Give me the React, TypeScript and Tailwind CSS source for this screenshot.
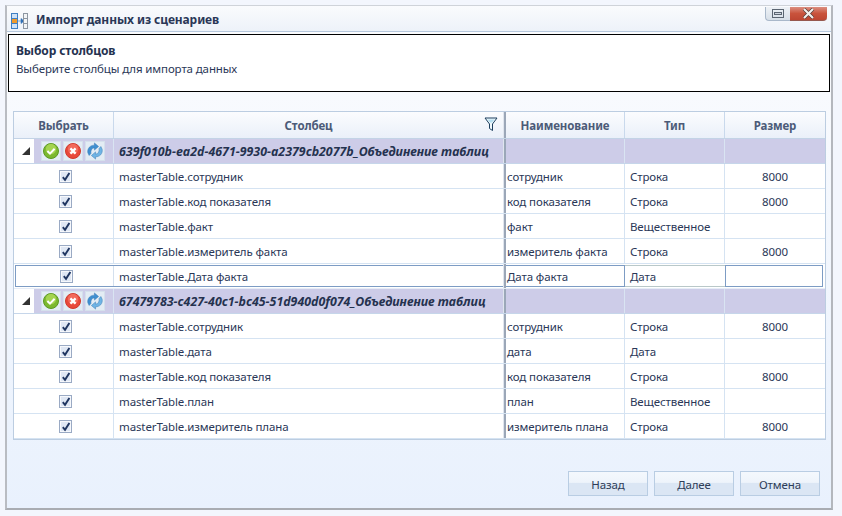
import React from 'react';

type Row = { column: string; name: string; type: string; size?: string; selected?: boolean };

const groups: { title: string; rows: Row[] }[] = [
  {
    title: '639f010b-ea2d-4671-9930-a2379cb2077b_Объединение таблиц',
    rows: [
      { column: 'masterTable.сотрудник', name: 'сотрудник', type: 'Строка', size: '8000' },
      { column: 'masterTable.код показателя', name: 'код показателя', type: 'Строка', size: '8000' },
      { column: 'masterTable.факт', name: 'факт', type: 'Вещественное' },
      { column: 'masterTable.измеритель факта', name: 'измеритель факта', type: 'Строка', size: '8000' },
      { column: 'masterTable.Дата факта', name: 'Дата факта', type: 'Дата', selected: true },
    ],
  },
  {
    title: '67479783-c427-40c1-bc45-51d940d0f074_Объединение таблиц',
    rows: [
      { column: 'masterTable.сотрудник', name: 'сотрудник', type: 'Строка', size: '8000' },
      { column: 'masterTable.дата', name: 'дата', type: 'Дата' },
      { column: 'masterTable.код показателя', name: 'код показателя', type: 'Строка', size: '8000' },
      { column: 'masterTable.план', name: 'план', type: 'Вещественное' },
      { column: 'masterTable.измеритель плана', name: 'измеритель плана', type: 'Строка', size: '8000' },
    ],
  },
];

const cols = 'grid grid-cols-[100px_389px_3px_119px_100px_100px]';

const WizardIcon = () => (
  <svg width="17" height="16" viewBox="0 0 17 16">
    <rect x="0.5" y="0.5" width="6" height="15" fill="#cfe2f7" stroke="#3f7fc4" />
    <path d="M1 5.5h5M1 10.5h5" stroke="#3f7fc4" />
    <rect x="1" y="6" width="5" height="4" fill="#f09a2a" />
    <path d="M7 8h3V5.5L13 8l-3 2.5V8" fill="#2f6fb5" stroke="#2f6fb5" strokeWidth="0.6" />
    <rect x="12.5" y="0.5" width="4" height="15" fill="#f2f4f6" stroke="#8c96a2" />
    <path d="M13 5.5h3M13 10.5h3" stroke="#8c96a2" />
  </svg>
);

const FilterIcon = () => (
  <svg width="14" height="15" viewBox="0 0 14 15">
    <path d="M1 1h12L8.5 7v6.5L5.5 11.5V7z" fill="#eef8fc" stroke="#1d3f5e" strokeWidth="1" />
    <path d="M3.5 2.5h7L8 5.5H6z" fill="#b5e0f2" />
  </svg>
);

const Check = () => (
  <span className="flex h-[13px] w-[13px] items-center justify-center border border-[#9aaac4] bg-[#dfe7f4] shadow-[inset_0_0_0_1px_#f6f8fc]">
    <svg width="10" height="10" viewBox="0 0 10 10">
      <path d="M1.8 5.2 4 7.8 8.4 1" fill="none" stroke="#1f3560" strokeWidth="1.9" />
    </svg>
  </span>
);

const ToolButton = ({ children }: { children: React.ReactNode }) => (
  <span className="flex h-5 w-5 items-center justify-center border border-[#d5e0ec] bg-[#e3ecf4]">{children}</span>
);

const GroupIcons = () => (
  <div className="flex items-center gap-[2px] pl-[7px]">
    <ToolButton>
      <svg width="16" height="16" viewBox="0 0 16 16">
        <circle cx="8" cy="8" r="7.5" fill="#7cb82f" stroke="#5b9a22" />
        <circle cx="8" cy="6" r="5.2" fill="#a4d44f" />
        <path d="M4.4 8 7 10.6l4.6-4.8" fill="none" stroke="#fff" strokeWidth="2" />
      </svg>
    </ToolButton>
    <ToolButton>
      <svg width="16" height="16" viewBox="0 0 16 16">
        <circle cx="8" cy="8" r="7.5" fill="#e8483a" stroke="#d0392c" />
        <circle cx="8" cy="6" r="5.2" fill="#f2695a" />
        <path d="M5.4 5.4l5.2 5.2M10.6 5.4l-5.2 5.2" stroke="#fff" strokeWidth="2.2" />
      </svg>
    </ToolButton>
    <ToolButton>
      <svg width="18" height="18" viewBox="0 0 16 16">
        <path d="M1.6 9.5C1 5.5 3.8 2.8 7.5 2.8V.8L11.2 4 7.5 7.2V5.3C5.5 5.3 4 7 4.4 10.2L2.8 12z" fill="#3f8fd0" stroke="#2e74b0" strokeWidth="0.4" />
        <path d="M14.4 6.5c.6 4-2.2 6.7-5.9 6.7v2L4.8 12l3.7-3.2v1.9c2 0 3.5-1.7 3.1-4.9L13.2 4z" fill="#6fb4e4" stroke="#2e74b0" strokeWidth="0.4" />
      </svg>
    </ToolButton>
  </div>
);

const HeaderCell = ({ children, last }: { children?: React.ReactNode; last?: boolean }) => (
  <div className={`flex items-center justify-center pt-[2px] text-[11.5px] font-bold text-[#4c5b78] ${last ? '' : 'border-r border-[#c9d9ec]'}`}>
    {children}
  </div>
);

const Splitter = () => <div className="border-l border-[#dfe5ee] bg-[#9ba7b8]" />;

const GroupRow = ({ title }: { title: string }) => (
  <div className={`${cols} h-[25px] border-b border-[#c6d6ea]`}>
    <div className="flex border-r border-[#d9e4f2]">
      <div className="flex w-5 items-center justify-center bg-white">
        <span className="ml-[3px] h-0 w-0 border-b-[8px] border-l-[8px] border-b-[#333] border-l-transparent" />
      </div>
      <div className="flex flex-1 items-center bg-[#cdcce8]">
        <GroupIcons />
      </div>
    </div>
    <div className="flex items-center bg-[#cdcce8] pt-[3px] pl-[5px] text-[12.4px] tracking-normal font-bold italic whitespace-nowrap text-[#25324f]">{title}</div>
    <Splitter />
    <div className="border-r border-[#d9e4f2] bg-[#cdcce8]" />
    <div className="border-r border-[#d9e4f2] bg-[#cdcce8]" />
    <div className="bg-[#cdcce8]" />
  </div>
);

const DataRow = ({ row }: { row: Row }) => {
  if (row.selected) {
    return (
      <div className={`${cols} h-[25px] border-b border-[#e6edf7]`}>
        <div className="relative my-px ml-px flex items-center justify-center border-y border-l border-[#7d9cc4] pl-[3px]">
          <Check />
          <span className="absolute top-0 right-0 bottom-0 w-px bg-[#d4e0ee]" />
        </div>
        <div className="my-px flex items-center border-y border-[#7d9cc4] pt-[2px] pl-[5px]">{row.column}</div>
        <Splitter />
        <div className="my-px flex items-center border-y border-r border-[#7d9cc4] pt-[2px] pl-px">{row.name}</div>
        <div className="my-px flex items-center border-y border-[#b9c8c9] pt-[2px] pl-[5px]">{row.type}</div>
        <div className="my-px mr-[2px] border border-[#7d9cc4]" />
      </div>
    );
  }
  return (
    <div className={`${cols} h-[25px] border-b border-[#d5e3f2]`}>
      <div className="flex items-center justify-center border-r border-[#d5e3f2] pt-[1px] pl-[4px]">
        <Check />
      </div>
      <div className="flex items-center pt-[2px] pl-[5px]">{row.column}</div>
      <Splitter />
      <div className="flex items-center border-r border-[#d5e3f2] pt-[2px] pl-px">{row.name}</div>
      <div className="flex items-center border-r border-[#d5e3f2] pt-[2px] pl-[5px]">{row.type}</div>
      <div className="flex items-center justify-center pt-[2px]">{row.size}</div>
    </div>
  );
};

const FooterButton = ({ label }: { label: string }) => (
  <button className="h-[25px] w-20 border border-[#b9cde3] bg-[linear-gradient(#f4f8fd_0%,#eef4fb_45%,#dbe6f4_50%,#dbe6f4_100%)] pt-[2px] text-[#2e3d58]">
    {label}
  </button>
);

export default function App() {
  return (
    <div className="h-[516px] w-[842px] overflow-hidden bg-[#f3f6fd] pt-[5px] pl-[5px] font-['Noto_Sans','Open_Sans',sans-serif] text-[11.5px] tracking-[-0.12px] text-[#2a3757]">
      <div className="flex h-[505px] w-[828px] flex-col border-t border-r-2 border-b-2 border-l-2 border-t-[#cfd3d9] border-r-[#b4b7bd] border-b-[#a9acb2] border-l-[#b9bcc2] bg-[linear-gradient(#fbfcfe,#e9f1fd)]">
        {/* title bar */}
        <div className="flex h-[26px] items-start justify-between border-b border-[#b5c7dc] bg-[linear-gradient(#fafbfd,#edf2f9)]">
          <div className="flex items-center pt-[6px] pl-1">
            <WizardIcon />
            <span className="ml-2 -translate-y-[1.5px] text-[12px] font-bold tracking-[-0.1px] text-[#2a3757]">Импорт данных из сценариев</span>
          </div>
          <div className="mt-px mr-[4px] flex h-[14px] items-stretch">
            <div className="flex w-[25px] items-center justify-center rounded-bl-[4px] border-b border-l border-[#a9b8ca] bg-[linear-gradient(#eef2f6,#d7dfe8)]">
              <span className="flex h-[9px] w-3 items-center justify-center border border-[#5c6672]">
                <span className="h-[3px] w-2 border border-[#5c6672] bg-[#cfd6df]" />
              </span>
            </div>
            <div className="flex w-[37px] items-center justify-center rounded-br-[4px] border-b border-[#96584e] bg-[linear-gradient(#dc8f80,#c9533c_50%,#bd4632)]">
              <svg width="13" height="11" viewBox="0 0 13 11">
                <path d="M2 1l9 9M11 1l-9 9" stroke="#4c3a36" strokeWidth="3.4" />
                <path d="M2 1l9 9M11 1l-9 9" stroke="#f4efec" strokeWidth="2.2" />
              </svg>
            </div>
          </div>
        </div>

        {/* wizard step header */}
        <div className="mt-[2px] mr-[1px] ml-px h-[58px] border border-black bg-white pt-[7px] pl-[7px]">
          <div className="text-[12px] leading-[17px] font-bold text-[#25324f]">Выбор столбцов</div>
          <div className="mt-px text-[11.5px] leading-[17px]">Выберите столбцы для импорта данных</div>
        </div>

        {/* columns grid */}
        <div className="mt-[19px] ml-[6px] w-[813px] border border-[#bccde1] bg-white">
          <div className={`${cols} h-[27px] border-b border-[#c3d3e6] bg-[linear-gradient(#fbfcfe,#eaf0f9)]`}>
            <HeaderCell>Выбрать</HeaderCell>
            <div className="relative flex items-center justify-center pt-[2px] text-[11.5px] font-bold text-[#4c5b78]">
              Столбец
              <span className="absolute top-[5px] right-[5px]">
                <FilterIcon />
              </span>
            </div>
            <Splitter />
            <HeaderCell>Наименование</HeaderCell>
            <HeaderCell>Тип</HeaderCell>
            <HeaderCell last>Размер</HeaderCell>
          </div>
          {groups.map((group) => (
            <div key={group.title}>
              <GroupRow title={group.title} />
              {group.rows.map((row) => (
                <DataRow key={row.column} row={row} />
              ))}
            </div>
          ))}
        </div>

        {/* footer */}
        <div className="mt-[31px] flex justify-end gap-[6px] pr-[11px]">
          <FooterButton label="Назад" />
          <FooterButton label="Далее" />
          <FooterButton label="Отмена" />
        </div>
      </div>
    </div>
  );
}
